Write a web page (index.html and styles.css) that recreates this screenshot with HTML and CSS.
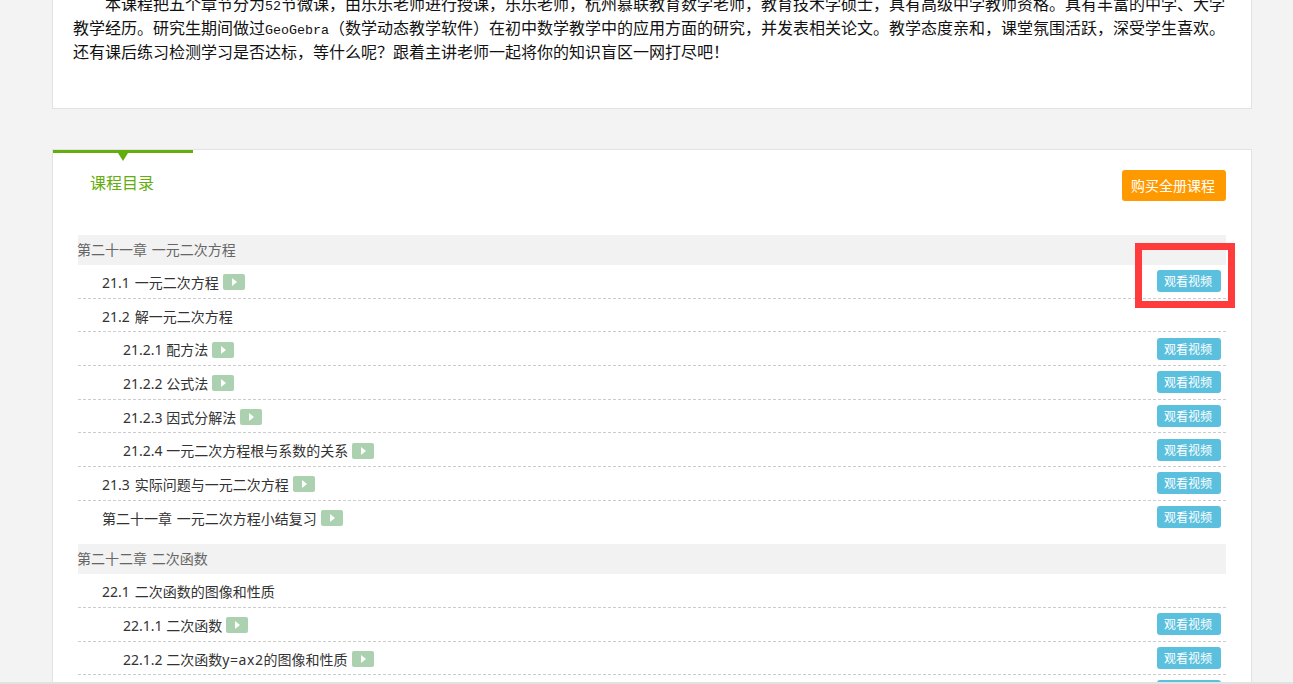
FILE: index.html
```html
<!DOCTYPE html>
<html lang="zh-CN">
<head>
<meta charset="utf-8">
<title>课程目录</title>
<link rel="stylesheet" href="styles.css">
</head>
<body>
<div class="page">
  <section class="intro">
    <div class="intro-text">
      <p class="line first">本课程把五个章节分为<span class="lat">52</span>节微课，由乐乐老师进行授课，乐乐老师，杭州慕联教育数学老师，教育技术学硕士，具有高级中学教师资格。具有丰富的中学、大学</p>
      <p class="line">教学经历。研究生期间做过<span class="lat">GeoGebra</span>（数学动态教学软件）在初中数学教学中的应用方面的研究，并发表相关论文。教学态度亲和，课堂氛围活跃，深受学生喜欢。</p>
      <p class="line">还有课后练习检测学习是否达标，等什么呢？跟着主讲老师一起将你的知识盲区一网打尽吧！</p>
    </div>
  </section>
  <section class="catalog">
    <div class="tab-bar"></div>
    <div class="cat-head">
      <h2 class="cat-title">课程目录</h2>
      <a class="buy">购买全册课程</a>
    </div>
    <div class="chapter">第二十一章 一元二次方程</div>
    <div class="row l2"><span class="name">21.1 一元二次方程</span><span class="play"></span><a class="watch">观看视频</a></div>
    <div class="row l2"><span class="name">21.2 解一元二次方程</span></div>
    <div class="row l3"><span class="name">21.2.1 配方法</span><span class="play"></span><a class="watch">观看视频</a></div>
    <div class="row l3"><span class="name">21.2.2 公式法</span><span class="play"></span><a class="watch">观看视频</a></div>
    <div class="row l3"><span class="name">21.2.3 因式分解法</span><span class="play"></span><a class="watch">观看视频</a></div>
    <div class="row l3"><span class="name">21.2.4 一元二次方程根与系数的关系</span><span class="play"></span><a class="watch">观看视频</a></div>
    <div class="row l2"><span class="name">21.3 实际问题与一元二次方程</span><span class="play"></span><a class="watch">观看视频</a></div>
    <div class="row l2 last"><span class="name">第二十一章 一元二次方程小结复习</span><span class="play"></span><a class="watch">观看视频</a></div>
    <div class="chapter">第二十二章 二次函数</div>
    <div class="row l2"><span class="name">22.1 二次函数的图像和性质</span></div>
    <div class="row l3"><span class="name">22.1.1 二次函数</span><span class="play"></span><a class="watch">观看视频</a></div>
    <div class="row l3"><span class="name">22.1.2 二次函数<span class="formula">y=ax2</span>的图像和性质</span><span class="play"></span><a class="watch">观看视频</a></div>
    <div class="row l3 tail"><a class="watch"></a></div>
  </section>
</div>
<div class="mark"></div>
<div class="bottom-line"></div>
</body>
</html>
```
FILE: styles.css
```css
* { box-sizing: border-box; }
html, body { margin: 0; height: 100%; overflow: hidden; }
body { background: #f3f3f3; font-family: "Noto Sans", "Noto Sans CJK SC", sans-serif; color: #333; word-spacing: 1px; }
.page { width: 1200px; margin-left: 52px; }
.intro { height: 109px; background: #fff; border: 1px solid #e2e2e2; border-top: 0; padding: 0 20px; overflow: hidden; }
.intro-text { margin-top: -9px; font-family: "Noto Sans CJK SC", sans-serif; font-size: 16px; color: #111; word-spacing: 0; }
.line { margin: 0; height: 24px; line-height: 24px; white-space: nowrap; }
.first { text-indent: 32px; }
.lat { font-family: "Liberation Mono", monospace; font-size: 13.33px; }
.catalog { position: relative; height: 600px; margin-top: 40px; background: #fff; border: 1px solid #e2e2e2; padding: 0 25px; }
.tab-bar { position: absolute; left: 0; top: 0; width: 140px; height: 3px; background: #63ad0e; }
.tab-bar::after { content: ""; position: absolute; left: 65px; top: 3px; border: 5px solid transparent; border-top: 8px solid #63ad0e; border-bottom: 0; }
.cat-head { display: flex; justify-content: space-between; align-items: flex-start; height: 85px; padding-top: 20px; }
.cat-title { margin: 1px 0 0 12px; font-size: 16px; font-weight: 400; line-height: 24px; color: #63ad0e; }
.buy { width: 104px; height: 31px; padding-right: 2px; line-height: 31px; text-align: center; font-size: 14px; color: #fff; background: #ff9900; border-radius: 3px; }
.chapter { height: 30px; padding-top: 1px; line-height: 28px; text-indent: -1px; font-size: 14px; color: #666; background: #f2f2f2; }
.row { display: flex; align-items: center; height: 33.67px; font-size: 14px; color: #333; border-bottom: 1px dashed #ccc; padding-right: 5px; }
.row.last { border-bottom: 0; height: 43.67px; padding-bottom: 10px; word-spacing: 1px; }
.l2 { padding-left: 24px; word-spacing: 1.4px; }
.l3 { padding-left: 45px; word-spacing: 0; }
.tail { align-items: flex-start; padding-top: 5px; }
.name { padding-top: 1.5px; }
.formula { letter-spacing: 0.6px; }
.play { position: relative; flex: none; width: 22px; height: 16px; margin: 2px 0 0 4px; background: #acd1b0; border-radius: 2px; }
.play::after { content: ""; position: absolute; left: 9px; top: 4px; border: 4px solid transparent; border-left: 5px solid #fff; border-right: 0; }
.watch { flex: none; width: 64px; height: 22px; margin-left: auto; padding-right: 2px; line-height: 24px; text-align: center; font-size: 12px; color: #fff; background: #5bc0de; border-radius: 3px; }
.bottom-line { position: absolute; left: 0; right: 0; top: 682px; height: 2px; background: #e2e2e2; }
.mark { position: absolute; left: 1135px; top: 243px; width: 100px; height: 65px; border: 7px solid #ff3b3b; }
```
